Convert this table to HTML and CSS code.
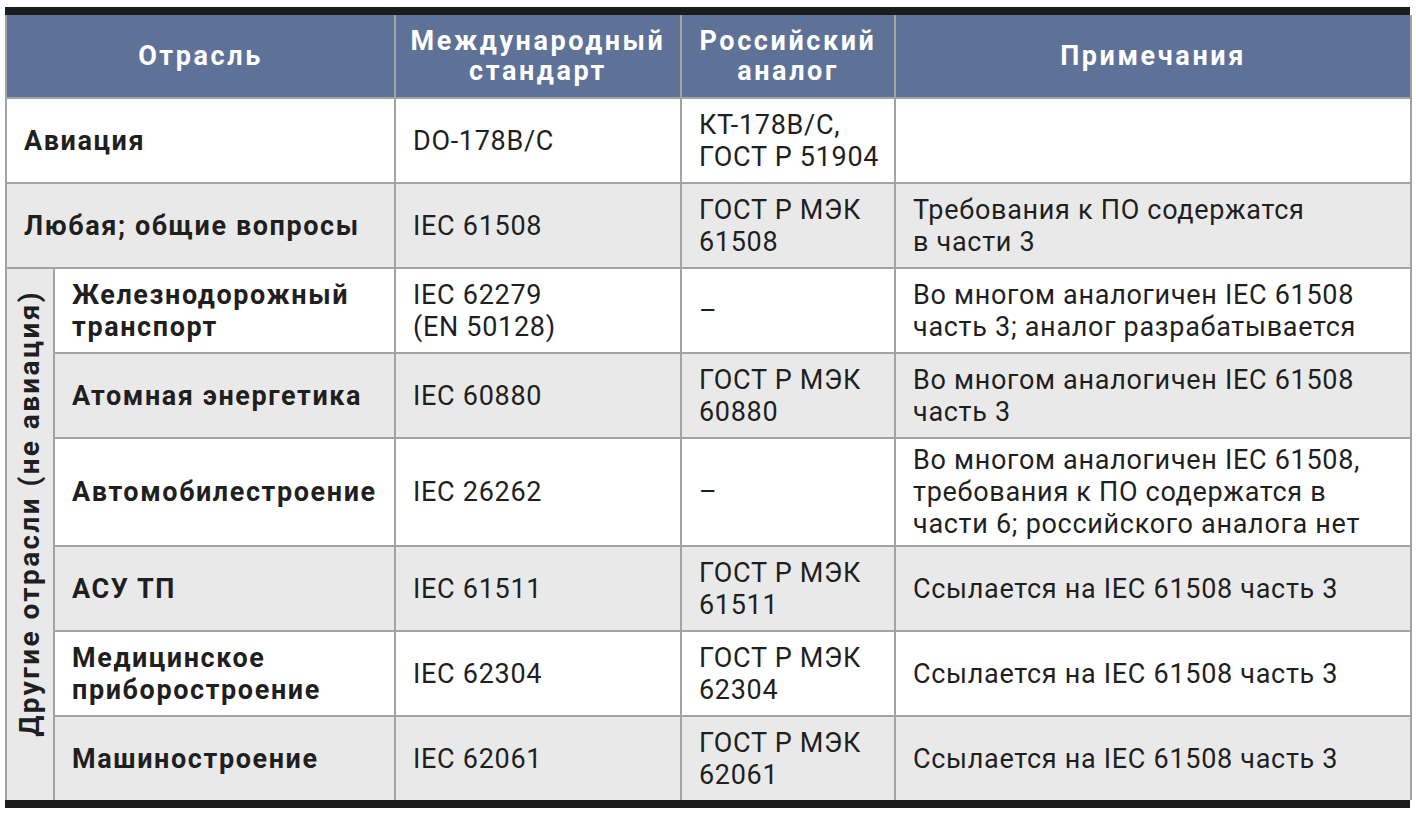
FILE: index.html
```html
<!DOCTYPE html>
<html lang="ru">
<head>
<meta charset="utf-8">
<title>Стандарты</title>
<link rel="stylesheet" href="styles.css">
</head>
<body>
<div class="frame">
  <table class="std">
    <colgroup>
      <col class="c-side">
      <col class="c-name">
      <col class="c-intl">
      <col class="c-ru">
      <col class="c-note">
    </colgroup>
    <thead>
      <tr class="head">
        <th colspan="2">Отрасль</th>
        <th>Международный стандарт</th>
        <th>Российский аналог</th>
        <th>Примечания</th>
      </tr>
    </thead>
    <tbody>
      <tr class="row white">
        <td class="name" colspan="2">Авиация</td>
        <td>DO-178B/C</td>
        <td>КТ-178B/C,<br>ГОСТ Р 51904</td>
        <td></td>
      </tr>
      <tr class="row gray">
        <td class="name" colspan="2">Любая; общие вопросы</td>
        <td>IEC 61508</td>
        <td>ГОСТ Р МЭК<br>61508</td>
        <td>Требования к ПО содержатся<br>в части 3</td>
      </tr>
      <tr class="row white">
        <td class="side" rowspan="8"><span class="vert">Другие отрасли (не авиация)</span></td>
        <td class="name">Железнодорожный<br>транспорт</td>
        <td>IEC 62279<br>(EN 50128)</td>
        <td>–</td>
        <td>Во многом аналогичен IEC 61508<br>часть 3; аналог разрабатывается</td>
      </tr>
      <tr class="row gray">
        <td class="name">Атомная энергетика</td>
        <td>IEC 60880</td>
        <td>ГОСТ Р МЭК<br>60880</td>
        <td>Во многом аналогичен IEC 61508<br>часть 3</td>
      </tr>
      <tr class="row tall white">
        <td class="name">Автомобилестроение</td>
        <td>IEC 26262</td>
        <td>–</td>
        <td>Во многом аналогичен IEC 61508,<br>требования к ПО содержатся в<br>части 6; российского аналога нет</td>
      </tr>
      <tr class="row gray">
        <td class="name">АСУ ТП</td>
        <td>IEC 61511</td>
        <td>ГОСТ Р МЭК<br>61511</td>
        <td>Ссылается на IEC 61508 часть 3</td>
      </tr>
      <tr class="row white">
        <td class="name">Медицинское<br>приборостроение</td>
        <td>IEC 62304</td>
        <td>ГОСТ Р МЭК<br>62304</td>
        <td>Ссылается на IEC 61508 часть 3</td>
      </tr>
      <tr class="row gray">
        <td class="name">Машиностроение</td>
        <td>IEC 62061</td>
        <td>ГОСТ Р МЭК<br>62061</td>
        <td>Ссылается на IEC 61508 часть 3</td>
      </tr>
    </tbody>
  </table>
</div>
</body>
</html>
```

FILE: styles.css
```css
html, body {
  margin: 0;
  padding: 0;
  background: #ffffff;
}

body {
  font-family: Roboto, "Noto Sans", "Liberation Sans", sans-serif;
  color: #1f1f1f;
}

.frame {
  width: 1405px;
  margin: 7px 0 0 5px;
  border-top: 8px solid #1c1c1c;
  border-bottom: 8px solid #1c1c1c;
}

.std {
  width: 100%;
  border-collapse: collapse;
  table-layout: fixed;
  font-size: 27px;
  line-height: 32px;
  letter-spacing: 0.7px;
}

.c-side { width: 48px; }
.c-name { width: 341px; }
.c-intl { width: 286px; }
.c-ru { width: 214px; }
.c-note { width: 516px; }

.std th,
.std td {
  border: 2px solid #a3a3a3;
  padding: 0 4px 0 17px;
  vertical-align: middle;
  text-align: left;
}

.std thead tr:first-child th {
  border-top: none;
}

.std tbody tr:last-child td,
.std td.side {
  border-bottom: none;
}

.head th {
  height: 82px;
  background: #5e7298;
  color: #ffffff;
  font-weight: 700;
  text-align: center;
  letter-spacing: 2.6px;
  line-height: 30px;
  padding: 0 2px;
}

.row td {
  height: 83px;
}

.row.tall td {
  height: 106px;
}

.white td {
  background: #ffffff;
}

.gray td {
  background: #e9e9e9;
}

td.name {
  font-weight: 700;
  letter-spacing: 1.6px;
}

td.side {
  background: #e9e9e9;
  padding: 0 0 36px 0;
  text-align: center;
}

.vert {
  display: inline-block;
  writing-mode: vertical-rl;
  transform: rotate(180deg);
  font-weight: 700;
  font-size: 28px;
  letter-spacing: 2.4px;
  white-space: nowrap;
  line-height: 30px;
}
```
